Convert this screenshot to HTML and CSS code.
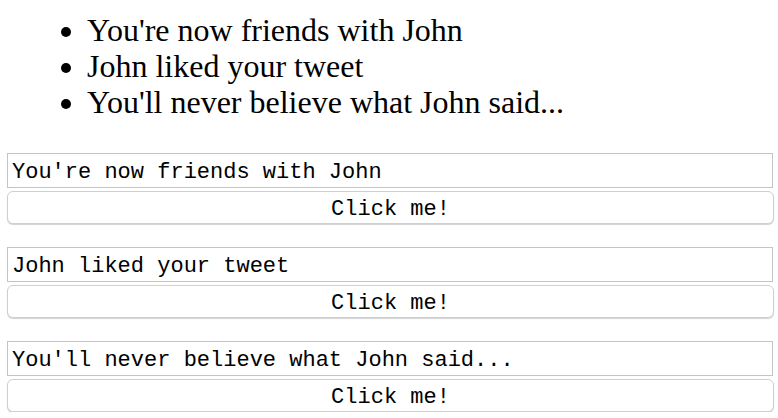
FILE: index.html
```html
<!DOCTYPE html>
<html>
<head>
<meta charset="utf-8">
<link rel="stylesheet" href="styles.css">
</head>
<body>
<ul class="feed">
  <li>You're now friends with John</li>
  <li>John liked your tweet</li>
  <li>You'll never believe what John said...</li>
</ul>
<div class="forms">
  <div class="group">
    <input class="field" type="text" value="You're now friends with John">
    <button class="btn">Click me!</button>
  </div>
  <div class="group">
    <input class="field" type="text" value="John liked your tweet">
    <button class="btn">Click me!</button>
  </div>
  <div class="group">
    <input class="field" type="text" value="You'll never believe what John said...">
    <button class="btn">Click me!</button>
  </div>
</div>
</body>
</html>
```
FILE: styles.css
```css
html, body {
  margin: 0;
  padding: 0;
  background: #fff;
}
body {
  padding: 0 4px 0 7px;
}
.feed {
  margin: 12px 0 0 0;
  padding-left: 80px;
  font-family: "Liberation Serif", "Times New Roman", serif;
  font-size: 32px;
  line-height: 36px;
  color: #000;
}
.forms {
  margin-top: 33px;
  display: flex;
  flex-direction: column;
  gap: 23px;
}
.group {
  display: flex;
  flex-direction: column;
  gap: 3px;
}
.field {
  box-sizing: border-box;
  width: 766px;
  height: 35px;
  margin: 0;
  padding: 4px 4px 0 4px;
  border: 1px solid #c4c4c4;
  border-radius: 0;
  font-family: "Liberation Mono", "Courier New", monospace;
  font-size: 22px;
  color: #000;
  background: #fff;
  outline: none;
}
.btn {
  box-sizing: border-box;
  width: 767px;
  height: 33px;
  margin: 0;
  padding: 4px 0 0 0;
  border: 1px solid #cfcfcf;
  border-radius: 6px;
  background: #fff;
  box-shadow: 0 1px 1px rgba(0, 0, 0, 0.18);
  font-family: "Liberation Mono", "Courier New", monospace;
  font-size: 22px;
  color: #000;
}
```
